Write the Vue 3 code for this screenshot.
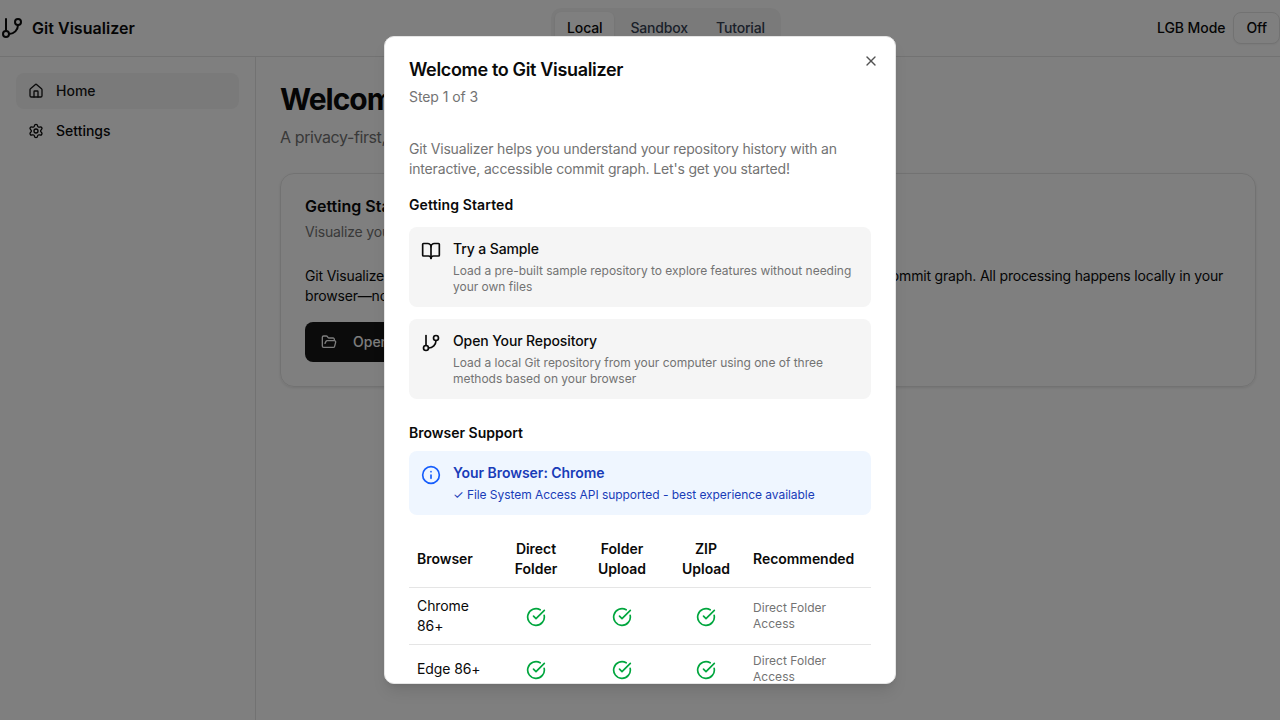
<script setup>
const browsers = ['Chrome 86+', 'Edge 86+']
const icons = {
  branch: '<line x1="6" x2="6" y1="3" y2="15"/><circle cx="18" cy="6" r="3"/><circle cx="6" cy="18" r="3"/><path d="M18 9a9 9 0 0 1-9 9"/>',
  home: '<path d="M15 21v-8a1 1 0 0 0-1-1h-4a1 1 0 0 0-1 1v8"/><path d="M3 10a2 2 0 0 1 .709-1.528l7-5.999a2 2 0 0 1 2.582 0l7 5.999A2 2 0 0 1 21 10v9a2 2 0 0 1-2 2H5a2 2 0 0 1-2-2z"/>',
  settings: '<path d="M9.671 4.136a2.34 2.34 0 0 1 4.659 0 2.34 2.34 0 0 0 3.319 1.915 2.34 2.34 0 0 1 2.33 4.033 2.34 2.34 0 0 0 0 3.831 2.34 2.34 0 0 1-2.33 4.033 2.34 2.34 0 0 0-3.319 1.915 2.34 2.34 0 0 1-4.659 0 2.34 2.34 0 0 0-3.32-1.915 2.34 2.34 0 0 1-2.33-4.033 2.34 2.34 0 0 0 0-3.831A2.34 2.34 0 0 1 6.35 6.051a2.34 2.34 0 0 0 3.319-1.915"/><circle cx="12" cy="12" r="3"/>',
  folder: '<path d="m6 14 1.5-2.9A2 2 0 0 1 9.24 10H20a2 2 0 0 1 1.94 2.5l-1.54 6a2 2 0 0 1-1.95 1.5H4a2 2 0 0 1-2-2V5a2 2 0 0 1 2-2h3.9a2 2 0 0 1 1.69.9l.81 1.2a2 2 0 0 0 1.67.9H18a2 2 0 0 1 2 2v2"/>',
  book: '<path d="M12 7v14"/><path d="M3 18a1 1 0 0 1-1-1V4a1 1 0 0 1 1-1h5a4 4 0 0 1 4 4 4 4 0 0 1 4-4h5a1 1 0 0 1 1 1v13a1 1 0 0 1-1 1h-6a3 3 0 0 0-3 3 3 3 0 0 0-3-3z"/>',
  info: '<circle cx="12" cy="12" r="10"/><path d="M12 16v-4"/><path d="M12 8h.01"/>',
  check: '<path d="M21.801 10A10 10 0 1 1 17 3.335"/><path d="m9 11 3 3L22 4"/>',
  close: '<path d="M18 6 6 18"/><path d="m6 6 12 12"/>',
}
</script>

<template>
  <div class="page">
    <header class="topbar">
      <div class="brand"><svg class="icon i24" viewBox="0 0 24 24" v-html="icons.branch" /><span>Git Visualizer</span></div>
      <div class="tabs"><span class="tab active">Local</span><span class="tab">Sandbox</span><span class="tab">Tutorial</span></div>
      <div class="mode"><span>LGB Mode</span><button class="off">Off</button></div>
    </header>
    <div class="body">
      <nav class="side">
        <a class="nav current"><svg class="icon i16" viewBox="0 0 24 24" v-html="icons.home" />Home</a>
        <a class="nav"><svg class="icon i16" viewBox="0 0 24 24" v-html="icons.settings" />Settings</a>
      </nav>
      <main class="main">
        <h1>Welcome to Git Visualizer</h1>
        <p class="lead">A privacy-first, local Git repository visualizer</p>
        <section class="card">
          <h2>Getting Started</h2>
          <p class="sub">Visualize your Git repository</p>
          <p class="copy">Git Visualizer helps you understand your repository history with an interactive, accessible commit graph. All processing happens locally in your<br>browser—no data leaves your device.</p>
          <button class="open"><svg class="icon i16" viewBox="0 0 24 24" v-html="icons.folder" />Open Repository</button>
        </section>
      </main>
    </div>

    <div class="overlay">
      <div class="dialog">
        <svg class="icon i16 close" viewBox="0 0 24 24" v-html="icons.close" />
        <h2 class="title">Welcome to Git Visualizer</h2>
        <p class="step">Step 1 of 3</p>
        <p class="intro">Git Visualizer helps you understand your repository history with an interactive, accessible commit graph. Let's get you started!</p>
        <h3 class="start">Getting Started</h3>
        <div class="options">
          <div class="box">
            <svg class="icon i20" viewBox="0 0 24 24" v-html="icons.book" />
            <div><h4>Try a Sample</h4><p>Load a pre-built sample repository to explore features without needing your own files</p></div>
          </div>
          <div class="box">
            <svg class="icon i20" viewBox="0 0 24 24" v-html="icons.branch" />
            <div><h4>Open Your Repository</h4><p>Load a local Git repository from your computer using one of three methods based on your browser</p></div>
          </div>
        </div>
        <h3 class="support">Browser Support</h3>
        <div class="box blue">
          <svg class="icon i20" viewBox="0 0 24 24" v-html="icons.info" />
          <div><h4>Your Browser: Chrome</h4><p>✓ File System Access API supported - best experience available</p></div>
        </div>
        <table>
          <colgroup><col class="c1"><col class="c2"><col class="c3"><col class="c4"><col class="c5"></colgroup>
          <thead><tr><th class="left">Browser</th><th>Direct Folder</th><th>Folder Upload</th><th>ZIP Upload</th><th class="left">Recommended</th></tr></thead>
          <tbody>
            <tr v-for="b in browsers" :key="b">
              <td>{{ b }}</td>
              <td v-for="n in 3" :key="n"><svg class="icon i20 ok" viewBox="0 0 24 24" v-html="icons.check" /></td>
              <td class="rec">Direct Folder Access</td>
            </tr>
          </tbody>
        </table>
      </div>
    </div>
  </div>
</template>

<style>
body { background: #fff; overflow: hidden; }
</style>
<style scoped>
* { box-sizing: border-box; margin: 0; }
.page { height: 720px; overflow: hidden; display: flex; flex-direction: column; background: #fff; color: #0a0a0a; font: 14px/20px Inter, "Noto Sans", sans-serif; }
.icon { fill: none; stroke: currentColor; stroke-width: 2; stroke-linecap: round; stroke-linejoin: round; flex: none; display: block; }
.i16 { width: 16px; height: 16px; }
.i20 { width: 20px; height: 20px; }
.i24 { width: 24px; height: 24px; }
button { font: inherit; letter-spacing: inherit; }
.topbar { height: 57px; flex: none; display: grid; grid-template-columns: 1fr auto 1fr; align-items: center; border-bottom: 1px solid #e5e5e5; }
.brand { display: flex; align-items: center; gap: 8px; font-size: 16px; line-height: 24px; font-weight: 600; letter-spacing: .03px; }
.tabs { display: flex; height: 40px; padding: 4px; background: #f5f5f5; border-radius: 10px; gap: 4px; margin-left: 52px; letter-spacing: -.16px; }
.tab { padding: 6px 12px; border-radius: 6px; font-weight: 500; color: #364153; }
.tab.active { background: #fff; color: #0a0a0a; box-shadow: 0 1px 3px rgba(0,0,0,.1); }
.mode { display: flex; align-items: center; justify-content: flex-end; gap: 8px; font-weight: 500; letter-spacing: -.07px; }
.off { height: 32px; padding: 0 12px; border: 1px solid #e5e5e5; border-radius: 8px; background: #fff; color: inherit; box-shadow: 0 1px 2px rgba(0,0,0,.05); }
.body { flex: 1; display: flex; min-height: 0; }
.side { width: 256px; border-right: 1px solid #e5e5e5; padding: 16px; display: flex; flex-direction: column; gap: 4px; }
.nav { display: flex; align-items: center; gap: 12px; height: 36px; padding: 0 12px; border-radius: 8px; font-weight: 500; }
.current { background: #f5f5f5; color: #171717; }
.main { flex: 1; padding: 24px; }
h1 { font-size: 30px; line-height: 36px; font-weight: 700; letter-spacing: -1px; }
.lead { margin-top: 8px; font-size: 16px; line-height: 24px; letter-spacing: -.4px; color: #737373; }
.card { margin-top: 24px; height: 214px; border: 1px solid #e5e5e5; border-radius: 14px; padding: 24px; box-shadow: 0 1px 3px rgba(0,0,0,.1); }
.card h2 { font-size: 16px; line-height: 16px; font-weight: 600; }
.sub { margin-top: 8px; color: #737373; letter-spacing: -.17px; }
.copy { margin-top: 24px; letter-spacing: -.18px; white-space: nowrap; }
.open { margin-top: 16px; height: 40px; padding: 0 16px; display: flex; align-items: center; gap: 16px; border: 0; border-radius: 8px; background: #171717; color: #fafafa; font-weight: 500; }
.overlay { position: absolute; inset: 0; background: rgba(0,0,0,.5); display: flex; align-items: center; justify-content: center; }
.dialog { position: relative; width: 512px; height: 648px; overflow: hidden; padding: 24px; background: #fff; border: 1px solid #e5e5e5; border-radius: 10px; box-shadow: 0 10px 15px -3px rgba(0,0,0,.1), 0 4px 6px -4px rgba(0,0,0,.1); }
.close { position: absolute; top: 16px; right: 16px; opacity: .7; }
.title { font-size: 18px; line-height: 18px; font-weight: 600; letter-spacing: -.34px; }
.step { margin-top: 8px; color: #737373; letter-spacing: -.08px; }
.intro { margin-top: 32px; color: #737373; letter-spacing: -.17px; }
h3 { margin-top: 16px; font-size: 14px; line-height: 20px; font-weight: 600; }
.start { letter-spacing: .12px; }
.options { margin-top: 12px; display: flex; flex-direction: column; gap: 12px; }
.box { display: flex; gap: 12px; padding: 12px; background: #f5f5f5; border-radius: 8px; }
.box .icon { margin-top: 2px; }
h4 { font-size: 14px; line-height: 20px; font-weight: 500; letter-spacing: -.12px; }
.box p { margin-top: 4px; font-size: 12px; line-height: 16px; color: #737373; letter-spacing: -.02px; }
.support { margin-top: 24px; }
.box.blue { margin-top: 8px; background: #eff6ff; color: #155dfc; }
.box.blue h4 { font-weight: 600; color: #193cb8; letter-spacing: -.04px; }
.box.blue p { color: #193cb8; letter-spacing: -.055px; }
table { margin-top: 16px; width: 462px; table-layout: fixed; border-collapse: separate; border-spacing: 0; }
.c1 { width: 86px; } .c2 { width: 82px; } .c3 { width: 90px; } .c4 { width: 78px; } .c5 { width: 126px; }
th, td { padding: 8px; border-bottom: 1px solid #e5e5e5; vertical-align: middle; text-align: left; letter-spacing: -.1px; }
th { text-align: center; font-weight: 600; letter-spacing: -.04px; }
th.left { text-align: left; }
.ok { margin: 2px auto 0; color: #00a63e; }
td.rec { font-size: 12px; line-height: 16px; color: #737373; letter-spacing: .04px; }
</style>
